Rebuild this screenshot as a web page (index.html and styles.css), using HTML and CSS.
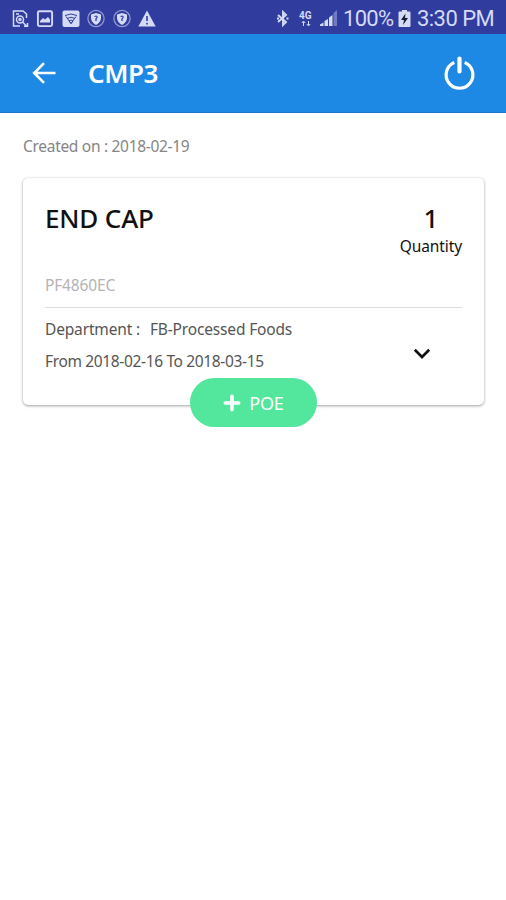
FILE: index.html
```html
<!DOCTYPE html>
<html lang="en">
<head>
<meta charset="utf-8">
<title>CMP3</title>
<link rel="stylesheet" href="styles.css">
</head>
<body>
<div class="status">
  <div class="notices">
    <svg width="18" height="20" viewBox="0 0 18 20" fill="none" stroke="currentColor" stroke-width="1.500"><path d="M15.500 9V5l-3.500-3H2.500v15H9M5 5h3"/><circle cx="9" cy="10.500" r="3.500"/><circle cx="9" cy="10.500" r="1"/><path d="M11.500 13l4 4M13 17.300h3.500V14"/></svg>
    <svg width="18" height="20" viewBox="0 0 18 20"><rect x="1.900" y="2.200" width="14.200" height="14.900" rx="1.500" fill="none" stroke="currentColor" stroke-width="1.900"/><path d="M4 13.500V12l3-3 2 1.500L12 8l2 2.500v3z" fill="currentColor"/></svg>
    <svg width="18" height="20" viewBox="0 0 18 20"><rect x=".5" y="1.500" width="17" height="16.500" rx="2" fill="currentColor"/><path d="M3 6.500q6-3 12 0M5 9.500q4-2.500 8 0M7 12l2-1 2 1-2 2.500zM4 7.500l5 7 5-7" fill="none" stroke="#303d9f" stroke-width="1"/></svg>
    <svg width="18" height="20" viewBox="0 0 18 20"><circle cx="9" cy="9.500" r="8.100" fill="none" stroke="currentColor" stroke-width="1.200" opacity=".6"/><path d="M9 4l5 1.500V9q0 4-5 7-5-3-5-7V5.500z" fill="currentColor"/><path d="M7.500 7.500q3-1 2.500 1L9 10v2" fill="none" stroke="#303d9f" stroke-width="1.300"/></svg>
    <svg width="18" height="20" viewBox="0 0 18 20"><circle cx="9" cy="9.500" r="8.100" fill="none" stroke="currentColor" stroke-width="1.200" opacity=".6"/><path d="M9 4l5 1.500V9q0 4-5 7-5-3-5-7V5.500z" fill="currentColor"/><path d="M7.500 7.500q3-1 2.500 1L9 10v2" fill="none" stroke="#303d9f" stroke-width="1.300"/></svg>
    <svg width="18" height="20" viewBox="0 0 18 20"><path d="M9 1.500L17.700 17.500H.3z" fill="currentColor"/><path d="M9 7v5M9 13.700v1.700" stroke="#303d9f" stroke-width="1.600"/></svg>
  </div>
  <svg class="bt" width="14" height="20" viewBox="0 0 14 20" fill="none" stroke="currentColor" stroke-width="1.900"><path d="M2 6l8 7-3 3V3l3 3-8 7M1 9.500h2M10.500 9.500h2"/></svg>
  <div class="net"><span>4G</span><svg width="10" height="7" viewBox="0 0 10 7"><path d="M2.500 6V2M.8 3L2.500 1l1.700 2M7.500 1v4M5.800 4l1.700 2 1.700-2" fill="none" stroke="currentColor"/></svg></div>
  <svg class="signal" width="18" height="20" viewBox="0 0 18 20" fill="currentColor"><path d="M0 15.500l3.500-2V17H0zM4.500 12l3.500-2v7H4.500zM9 8.500l3.500-2.500v11H9z"/><path d="M13.500 4L17 1v16h-3.500z" opacity=".4"/></svg>
  <span class="pct">100%</span>
  <svg class="battery" width="13" height="20" viewBox="0 0 13 20"><path d="M4 1h5v1.500h2.500q1 0 1 1V17q0 1-1 1h-10q-1 0-1-1V3.500q0-1 1-1H4z" fill="currentColor"/><path d="M7.500 4.500L3 11h3l-1 5 5-7H7z" fill="#171b35"/></svg>
  <span class="clock">3:30 PM</span>
</div>
<header class="bar">
  <svg class="back" width="24" height="22" viewBox="0 0 24 22" fill="none" stroke="#fff" stroke-width="2.600"><path d="M12 1.200L2.200 11l9.800 9.800M2.500 11H23.500"/></svg>
  <h1>CMP3</h1>
  <svg class="power" width="34" height="36" viewBox="0 0 34 36" fill="none" stroke="#fff" stroke-width="3.200"><path d="M12.300 7.500A13.400 13.400 0 1 0 22.700 7.500"/><path d="M17.500 3.500v13" stroke-width="4.200" stroke-linecap="round"/></svg>
</header>
<main>
  <p class="created">Created on : 2018-02-19</p>
  <section class="card">
    <div class="top">
      <h2>END CAP</h2>
      <div class="qty"><b>1</b><span>Quantity</span></div>
    </div>
    <p class="code">PF4860EC</p>
    <div class="details">
      <div class="lines">
        <p class="dept"><span class="label">Department :</span><span class="value">FB-Processed Foods</span></p>
        <p class="dates">From 2018-02-16 To 2018-03-15</p>
      </div>
      <svg class="chev" width="18" height="12" viewBox="0 0 18 12" fill="none" stroke="#111" stroke-width="2.700"><path d="M1.800 1.800L9 9l7.200-7.200"/></svg>
    </div>
    <button class="poe"><svg width="18" height="18" viewBox="0 0 18 18" stroke="#fff" stroke-width="3.600" stroke-linecap="round"><path d="M9 2.300v13.400M2.300 9h13.400"/></svg><span>POE</span></button>
  </section>
</main>
</body>
</html>
```
FILE: styles.css
```css
* { box-sizing: border-box; }
body { margin: 0; min-height: 100vh; background: #fff; font-family: "Noto Sans", "Open Sans", sans-serif; color: #111; }
h1, h2, p { margin: 0; white-space: nowrap; }
svg { display: block; flex: none; }
.status { height: 34px; background: #303d9f; color: #d5daf5; display: flex; align-items: center; padding: 3px 12px 0 11px; font-family: Roboto, sans-serif; font-size: 22px; line-height: 30px; white-space: nowrap; }
.notices { display: flex; gap: 7.400px; margin-right: auto; }
.bt { margin-right: 9px; }
.net { width: 15px; margin-right: 6px; font-size: 10px; line-height: 9px; font-weight: 700; }
.net svg { margin: 0 0 0 2px; }
.signal { margin-right: 5px; }
.pct { width: 52px; margin-right: 3px; letter-spacing: -.700px; }
.battery { margin-right: 6px; }
.clock { width: 77px; letter-spacing: -.550px; }
.bar { height: 79px; background: #1e88e5; border-bottom: 1px solid #1976d2; display: flex; align-items: center; padding: 0 30px 0 32px; color: #fff; }
h1 { margin-left: 32px; font-size: 26px; line-height: 36px; font-weight: 600; letter-spacing: -.400px; }
.power { margin-left: auto; }
main { padding: 21px 22px 0 23px; }
.created { font-size: 15.500px; line-height: 24px; letter-spacing: -.300px; color: #858585; }
.card { position: relative; height: 227px; margin-top: 20px; padding: 22px 22px 0; border-radius: 5px; box-shadow: 0 1px 3px rgba(0,0,0,.35), 0 0 2px rgba(0,0,0,.1); }
.top { display: flex; justify-content: space-between; height: 74px; }
h2 { font-size: 26px; line-height: 36px; font-weight: 500; letter-spacing: -.150px; }
.qty { display: flex; flex-direction: column; align-items: center; }
.qty b { font-size: 26px; line-height: 36px; font-weight: 500; }
.qty span { margin-top: 1px; font-size: 15.500px; line-height: 18px; letter-spacing: -.100px; }
.code { height: 34px; border-bottom: 1px solid #ddd; font-size: 15.500px; line-height: 22px; letter-spacing: -.150px; color: #b4b4b4; }
.details { display: flex; justify-content: space-between; padding-top: 5px; font-size: 15.500px; line-height: 32px; color: #555; }
.dept { display: flex; gap: 10px; letter-spacing: -.160px; }
.dates { letter-spacing: -.350px; }
.chev { margin: 35px 31px 0 0; }
.poe { position: absolute; left: 167px; top: 200px; width: 127px; height: 49px; border: 0; border-radius: 25px; background: #53e69d; color: #fff; display: flex; align-items: center; justify-content: center; gap: 8px; padding: 0; font: 18px/26px "Noto Sans", sans-serif; letter-spacing: -.200px; }
```
